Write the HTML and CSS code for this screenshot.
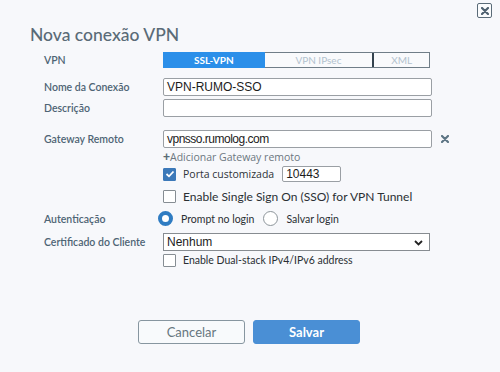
FILE: index.html
```html
<!DOCTYPE html>
<html>
<head>
<meta charset="utf-8">
<link rel="stylesheet" href="styles.css">
</head>
<body>
<div class="dialog">
  <button class="close" aria-label="Fechar">
    <svg width="8" height="8" viewBox="0 0 8 8"><path d="M1 1L7 7M7 1L1 7" stroke="#4f6170" stroke-width="2.2" stroke-linecap="round"/></svg>
  </button>
  <h1 class="title">Nova conexão VPN</h1>
  <div class="form">
    <div class="label row-vpn">VPN</div>
    <div class="row-vpn ctl">
      <div class="seg">
        <span class="seg-item active s1">SSL-VPN</span>
        <span class="seg-item s2">VPN IPsec</span>
        <span class="seg-item s3">XML</span>
      </div>
    </div>

    <div class="label row-name">Nome da Conexão</div>
    <div class="row-name ctl"><div class="input">VPN-RUMO-SSO</div></div>

    <div class="label row-desc">Descrição</div>
    <div class="row-desc ctl"><div class="input"></div></div>

    <div class="label row-gw">Gateway Remoto</div>
    <div class="row-gw ctl">
      <div class="input gw">vpnsso.rumolog.com</div>
      <svg class="del" width="8" height="8" viewBox="0 0 8 8"><path d="M1 1L7 7M7 1L1 7" stroke="#5d7584" stroke-width="2.2" stroke-linecap="round"/></svg>
    </div>

    <div class="row-add ctl span2"><span class="add"><b>+</b>Adicionar Gateway remoto</span></div>

    <div class="row-port ctl span2">
      <span class="cb checked"><svg width="10" height="8" viewBox="0 0 10 8"><path d="M1.5 4L4 6.3L8.5 1.5" fill="none" stroke="#fff" stroke-width="1.8"/></svg></span>
      <span class="opt">Porta customizada</span>
      <div class="input small">10443</div>
    </div>

    <div class="row-sso ctl span2">
      <span class="cb"></span>
      <span class="opt lato">Enable Single Sign On (SSO) for VPN Tunnel</span>
    </div>

    <div class="label row-auth">Autenticação</div>
    <div class="row-auth ctl radios">
      <span class="radio on"></span><span class="opt lato sm first">Prompt no login</span>
      <span class="radio"></span><span class="opt lato sm">Salvar login</span>
    </div>

    <div class="label row-cert">Certificado do Cliente</div>
    <div class="row-cert ctl">
      <div class="input select">Nenhum
        <svg class="chev" width="9" height="6" viewBox="0 0 9 6"><path d="M1 1L4.5 4.5L8 1" fill="none" stroke="#222" stroke-width="1.8"/></svg>
      </div>
    </div>

    <div class="row-dual ctl span2">
      <span class="cb"></span>
      <span class="opt lato sm">Enable Dual-stack IPv4/IPv6 address</span>
    </div>
  </div>
  <div class="buttons">
    <button class="btn cancel">Cancelar</button>
    <button class="btn save">Salvar</button>
  </div>
</div>
</body>
</html>
```
FILE: styles.css
```css
html, body {
  margin: 0;
  padding: 0;
  background: #f7f8fb;
  width: 500px;
  height: 372px;
  overflow: hidden;
}
.dialog {
  position: relative;
  padding: 24px 0 0 30px;
  font-family: Lato, "Liberation Sans", sans-serif;
}
.close {
  position: absolute;
  left: 477px;
  top: 3px;
  width: 15px;
  height: 15px;
  padding: 0;
  border: 1px solid #5a6b78;
  border-radius: 2px;
  background: #fbfcfd;
  display: flex;
  align-items: center;
  justify-content: center;
}
.title {
  margin: 0;
  font-size: 17.5px;
  line-height: 22px;
  font-weight: 500;
  color: #5a6b77;
  height: 22px;
}
.form {
  display: grid;
  grid-template-columns: 119px 1fr;
  padding-left: 14px;
  margin-top: 6px;
}
.label {
  font-size: 10.5px;
  color: #4e6474;
  font-weight: 600;
  display: flex;
  align-items: center;
  grid-column: 1;
}
.ctl {
  grid-column: 2;
  display: flex;
  align-items: center;
}
.span2 { grid-column: 2; }

.row-vpn { height: 16px; }
.row-name { height: 18px; margin-top: 10px; }
.row-desc { height: 18px; margin-top: 3px; }
.row-gw { height: 18px; margin-top: 13px; }
.row-add { height: 14px; margin-top: 2px; }
.row-port { height: 16px; margin-top: 2px; }
.row-sso { height: 14px; margin-top: 7px; }
.row-auth { height: 15px; margin-top: 8px; }
.row-cert { height: 18px; margin-top: 7px; }
.row-dual { height: 14px; margin-top: 2px; }

.seg {
  display: flex;
  height: 16px;
  width: 267px;
  box-sizing: border-box;
  border: 1px solid #707e88;
  border-left: none;
  font-size: 10px;
}
.seg-item {
  display: flex;
  align-items: center;
  justify-content: center;
  color: #b3c2ce;
  background: #f9fafc;
  box-sizing: border-box;
}
.seg-item.active {
  background: #2b8fe9;
  color: #ffffff;
  font-weight: 700;
  margin-top: -1px;
  height: 16px;
}
.s1 { width: 102px; }
.s2 { width: 108px; }
.s3 { width: 57px; border-left: 2px solid #33424e; }

.input {
  width: 269px;
  height: 18px;
  box-sizing: border-box;
  border: 1px solid #9a9fa4;
  border-radius: 2px;
  background: #fff;
  font-family: "Liberation Sans", Arial, sans-serif;
  font-size: 12px;
  color: #1c1c1c;
  padding: 0 3px;
  display: flex;
  align-items: center;
}
.input.gw { letter-spacing: -0.5px; }
.input.small {
  width: 59px;
  height: 16px;
  margin-left: 8px;
  font-size: 12px;
}
.del { margin-left: 9px; }
.add {
  font-family: "Open Sans", "Noto Sans", sans-serif;
  font-size: 10.5px;
  color: #6c7780;
}
.add b { color: #5b6b76; font-weight: 700; font-family: "Liberation Sans", sans-serif; font-size: 12px; }
.cb {
  width: 13px;
  height: 13px;
  box-sizing: border-box;
  border: 1px solid #868d93;
  background: #fff;
  border-radius: 1px;
  display: flex;
  align-items: center;
  justify-content: center;
  flex-shrink: 0;
}
.cb.checked {
  background: #3c79b9;
  border-color: #3c79b9;
}
.opt {
  font-family: "Open Sans", "Noto Sans", sans-serif;
  font-size: 10.5px;
  color: #2e3338;
  margin-left: 7px;
}
.opt.lato {
  font-family: Lato, sans-serif;
  font-size: 12px;
  color: #2a2f33;
}
.opt.lato.sm { font-size: 10.5px; }
.radios { margin-left: -5px; }
.radio {
  width: 15px;
  height: 15px;
  box-sizing: border-box;
  border-radius: 50%;
  border: 1px solid #8d959b;
  background: #fff;
  flex-shrink: 0;
}
.radio.on { border: 4px solid #2f7cc2; }
.radio + .opt { margin-left: 8px; }
.opt.first { margin-right: 9px; }
.select {
  width: 267px;
  justify-content: space-between;
  border-color: #878c91;
  border-radius: 0;
  padding-right: 6px;
}
.chev { margin-top: 1px; }
.buttons {
  display: flex;
  gap: 8px;
  margin: 53px 0 0 108px;
}
.btn {
  width: 107px;
  height: 24px;
  box-sizing: border-box;
  border-radius: 3px;
  font-family: Lato, sans-serif;
  font-size: 13px;
  padding: 0;
}
.cancel {
  background: #f8fafc;
  border: 1px solid #8796a0;
  color: #66767f;
}
.save {
  background: #4a8fd5;
  border: 1px solid #4a8fd5;
  color: #fff;
  font-weight: 700;
}
```
